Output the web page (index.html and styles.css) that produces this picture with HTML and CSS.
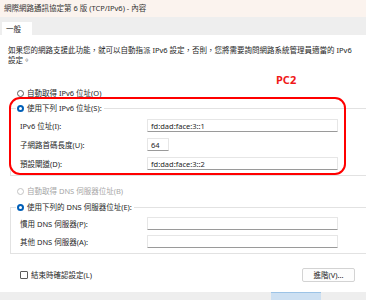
FILE: index.html
```html
<!DOCTYPE html>
<html lang="zh-Hant">
<head>
    <meta charset="UTF-8">
    <title>網際網路通訊協定第 6 版 (TCP/IPv6) - 內容</title>
    <link rel="stylesheet" href="styles.css">
</head>
<body>

<div class="titlebar">網際網路通訊協定第 6 版 (TCP/IPv6) - 內容</div>

<div class="tabs">
    <div class="tab">一般</div>
</div>

<div class="panel">
    <p class="desc">如果您的網路支援此功能，就可以自動指派 IPv6 設定，否則，您將需要詢問網路系統管理員適當的 IPv6 設定。</p>

    <div class="option option-top">
        <span class="radio"></span>自動取得 IPv6 位址(O)
    </div>

    <fieldset class="group">
        <legend class="option"><span class="radio checked"></span>使用下列 IPv6 位址(S):</legend>
        <div class="row">
            <label>IPv6 位址(I):</label>
            <div class="field">fd:dad:face:3::1</div>
        </div>
        <div class="row">
            <label>子網路首碼長度(U):</label>
            <div class="field field-short">64</div>
        </div>
        <div class="row">
            <label>預設閘道(D):</label>
            <div class="field">fd:dad:face:3::2</div>
        </div>
    </fieldset>

    <div class="option option-mid disabled">
        <span class="radio"></span>自動取得 DNS 伺服器位址(B)
    </div>

    <fieldset class="group group-dns">
        <legend class="option"><span class="radio checked"></span>使用下列的 DNS 伺服器位址(E):</legend>
        <div class="row">
            <label>慣用 DNS 伺服器(P):</label>
            <div class="field"></div>
        </div>
        <div class="row">
            <label>其他 DNS 伺服器(A):</label>
            <div class="field"></div>
        </div>
    </fieldset>

    <div class="actions">
        <div class="option">
            <span class="checkbox"></span>結束時確認設定(L)
        </div>
        <button class="btn">進階(V)...</button>
    </div>
</div>

<div class="footer">
    <span class="ok-edge"></span>
</div>

<!-- annotation drawn over the dialog -->
<div class="note">PC2</div>
<div class="highlight"></div>

</body>
</html>
```

FILE: styles.css
```css
body {
    margin: 0;
    width: 366px;
    height: 300px;
    overflow: hidden;
    position: relative;
    font-family: 'Noto Sans', 'Noto Sans CJK TC', sans-serif;
    font-size: 7.5px;
    line-height: 10px;
    color: #262626;
    background: #ffffff;
}
.titlebar {
    height: 17px;
    line-height: 17px;
    padding-left: 4px;
    background: #fbf3ee;
    color: #333;
}
.tabs {
    height: 18px;
    background: #eeeeee;
    display: flex;
    align-items: flex-end;
    padding-left: 2px;
}
.tab {
    width: 26px;
    height: 13px;
    line-height: 14px;
    padding-left: 4px;
    background: #ffffff;
}
.panel {
    height: 247px;
    padding: 10px 0 0 8px;
}
.desc {
    margin: 0;
    width: 350px;
}
.option {
    display: flex;
    align-items: center;
    height: 10px;
}
.option-top {
    margin: 23px 0 0 9px;
}
.option-mid {
    margin: 10px 0 0 9px;
}
.disabled {
    color: #a6a6a6;
}
.radio {
    width: 5px;
    height: 5px;
    border: 1px solid #5c5c5c;
    border-radius: 50%;
    margin-right: 3px;
    background: #fff;
}
.radio.checked {
    width: 3px;
    height: 3px;
    border: 2px solid #005fb8;
    background: #fff;
}
.disabled .radio {
    border-color: #c4c4c4;
}
.checkbox {
    width: 6px;
    height: 6px;
    border: 1px solid #5c5c5c;
    border-radius: 1px;
    margin-right: 3px;
}
/* the group boxes continue past the right edge of the crop */
.group {
    margin: 5px 0 0 2px;
    padding: 6px 0 5px 9px;
    border: 1px solid #e2e2e2;
    border-right: none;
    min-width: 0;
}
.group legend {
    padding: 0 2px 0 1px;
    margin-left: -4px;
}
.group-dns {
    margin-top: 6px;
    padding-top: 5px;
}
.row {
    display: flex;
    align-items: center;
    height: 13px;
}
.row + .row {
    margin-top: 6px;
}
.group-dns .row + .row {
    margin-top: 5px;
}
.row label {
    width: 127px;
}
.field {
    width: 186px;
    height: 11px;
    line-height: 12px;
    padding-left: 3px;
    background: #fff;
    border: 1px solid #e6e6e6;
    border-bottom-color: #9a9a9a;
    border-radius: 1px;
}
.field-short {
    width: 17px;
}
.actions {
    display: flex;
    align-items: center;
    justify-content: space-between;
    margin: 14px 11px 0 12px;
}
.btn {
    width: 53px;
    height: 14px;
    padding: 0;
    font: inherit;
    color: #262626;
    background: #fdfdfd;
    border: 1px solid #d3d3d3;
    border-radius: 2px;
}
.footer {
    height: 8px;
    background: #eeeeee;
    position: relative;
}
.ok-edge {
    display: block;
    width: 50px;
    height: 7px;
    margin-left: 271px;
    background: #cde0f2;
    border-top: 1px solid #9cc3e6;
}
.note {
    position: absolute;
    left: 276px;
    top: 73px;
    font-size: 11px;
    line-height: 14px;
    font-weight: bold;
    color: #f01818;
}
.highlight {
    position: absolute;
    left: 9px;
    top: 97px;
    width: 333px;
    height: 74px;
    border: 2px solid #f00;
    border-radius: 11px;
}
```
